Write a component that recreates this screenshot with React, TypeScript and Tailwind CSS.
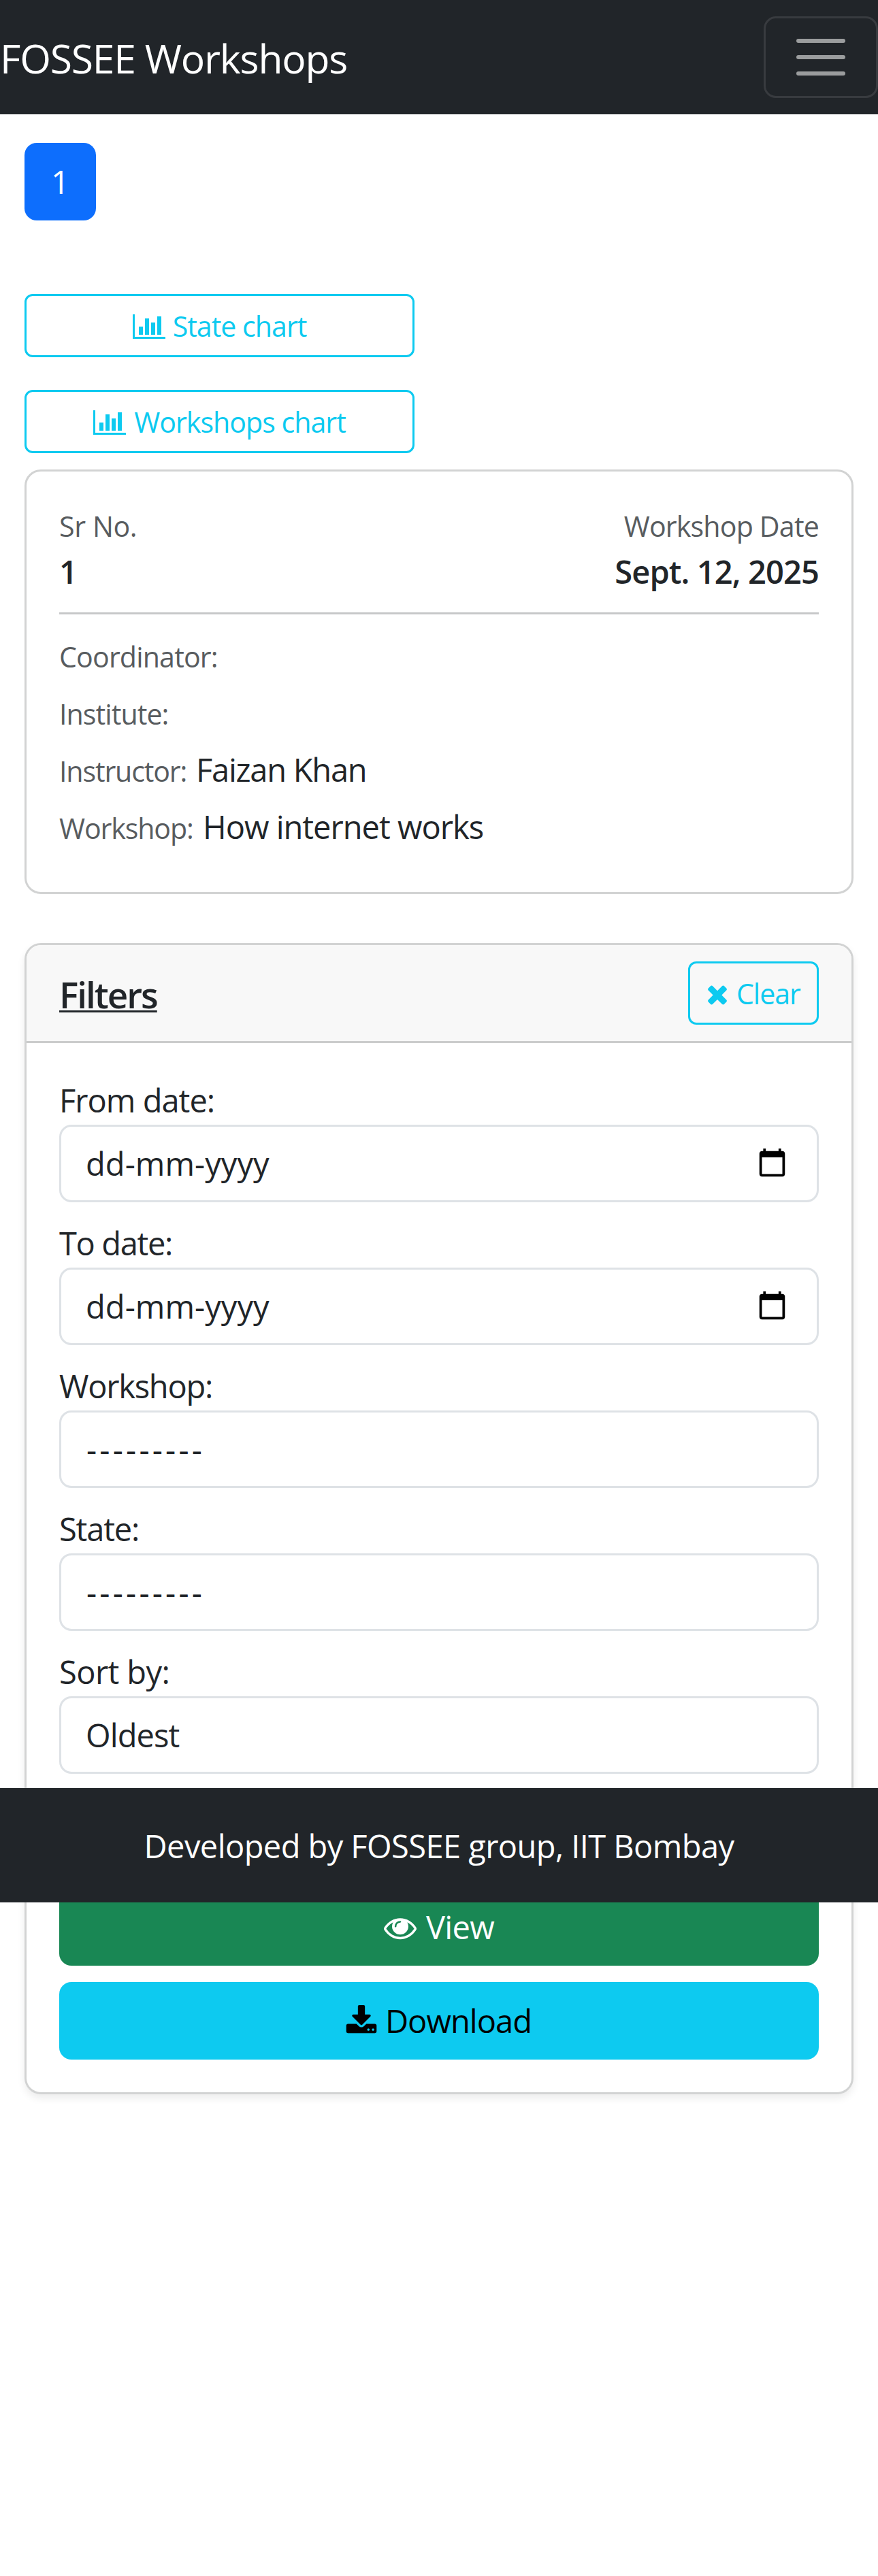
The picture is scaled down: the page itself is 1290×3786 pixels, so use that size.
import React from "react";

type IconProps = { className?: string };

const BarChartIcon = ({ className = "" }: IconProps) => (
  <svg viewBox="0 0 2048 1792" fill="currentColor" className={className}>
    <path d="M640 896v512h-256v-512h256zM1024 384v1024h-256v-1024h256zM2048 1536v128h-2048v-1536h128v1408h1920zM1408 640v768h-256v-768h256zM1792 256v1152h-256v-1152h256z" />
  </svg>
);

const TimesIcon = ({ className = "" }: IconProps) => (
  <svg viewBox="0 0 1792 1792" fill="currentColor" className={className}>
    <path d="M1490 1322q0 40-28 68l-136 136q-28 28-68 28t-68-28l-294-294-294 294q-28 28-68 28t-68-28l-136-136q-28-28-28-68t28-68l294-294-294-294q-28-28-28-68t28-68l136-136q28-28 68-28t68 28l294 294 294-294q28-28 68-28t68 28l136 136q28 28 28 68t-28 68l-294 294 294 294q28 28 28 68z" />
  </svg>
);

const EyeIcon = ({ className = "" }: IconProps) => (
  <svg viewBox="0 0 1792 1792" fill="currentColor" className={className}>
    <path d="M1664 960q-152-236-381-353 61 104 61 225 0 185-131.5 316.5t-316.5 131.5-316.5-131.5-131.5-316.5q0-121 61-225-229 117-381 353 133 205 333.5 326.5t434.5 121.5 434.5-121.5 333.5-326.5zm-720-384q0-20-14-34t-34-14q-125 0-214.5 89.5t-89.5 214.5q0 20 14 34t34 14 34-14 14-34q0-86 61-147t147-61q20 0 34-14t14-34zm848 384q0 34-20 69-140 230-376.5 368.5t-499.5 138.5-499.5-139-376.5-368q-20-35-20-69t20-69q140-229 376.5-368t499.5-139 499.5 139 376.5 368q20 35 20 69z" />
  </svg>
);

const DownloadIcon = ({ className = "" }: IconProps) => (
  <svg viewBox="0 0 1792 1792" fill="currentColor" className={className}>
    <path d="M1344 1344q0-26-19-45t-45-19-45 19-19 45 19 45 45 19 45-19 19-45zm256 0q0-26-19-45t-45-19-45 19-19 45 19 45 45 19 45-19 19-45zm128-224v320q0 40-28 68t-68 28h-1472q-40 0-68-28t-28-68v-320q0-40 28-68t68-28h465l135 136q58 56 136 56t136-56l136-136h464q40 0 68 28t28 68zm-325-569q17 41-14 70l-448 448q-18 19-45 19t-45-19l-448-448q-31-29-14-70 17-39 59-39h256v-448q0-26 19-45t45-19h256q26 0 45 19t19 45v448h256q42 0 59 39z" />
  </svg>
);

const CalendarIcon = ({ className = "" }: IconProps) => (
  <svg viewBox="0 0 24 24" fill="black" className={className}>
    <path d="M20 3h-1V1h-2v2H7V1H5v2H4c-1.1 0-2 .9-2 2v16c0 1.1.9 2 2 2h16c1.1 0 2-.9 2-2V5c0-1.1-.9-2-2-2zm0 18H4V8h16v13z" />
  </svg>
);

const outline =
  "flex h-[93px] items-center rounded-[12px] border-[3px] border-[#0dcaf0] text-[41.16px] leading-[63px] text-[#0dcaf0]";

const details = [
  { label: "Coordinator:", value: "", labelClass: "tracking-[-0.85px]" },
  { label: "Institute:", value: "", labelClass: "tracking-[-0.95px]" },
  { label: "Instructor:", value: "Faizan Khan", labelClass: "w-[201px] tracking-[-1.15px]", valueClass: "tracking-[-1.25px]" },
  { label: "Workshop:", value: "How internet works", labelClass: "w-[211px] tracking-[-1.12px]", valueClass: "tracking-[-1px]" },
];

const fields = [
  { label: "From date:", labelClass: "tracking-[-0.98px]", value: "dd-mm-yyyy", valueClass: "tracking-[0.05px]", date: true },
  { label: "To date:", labelClass: "tracking-[-1.36px]", value: "dd-mm-yyyy", valueClass: "tracking-[0.05px]", date: true },
  { label: "Workshop:", labelClass: "tracking-[-1.25px]", value: "---------", valueClass: "pl-px tracking-[4.22px]" },
  { label: "State:", labelClass: "tracking-[-1.17px]", value: "---------", valueClass: "pl-px tracking-[4.22px]" },
  { label: "Sort by:", labelClass: "tracking-[-0.6px]", value: "Oldest", valueClass: "tracking-[-0.91px]" },
];

function Navbar() {
  return (
    <header className="flex h-[168px] items-center justify-between bg-[#212529]">
      <span className="pt-[2px] text-[58.8px] leading-[90px] tracking-[-1.2px] text-white">FOSSEE Workshops</span>
      <button className="flex h-[120px] w-[168px] flex-col items-center justify-center gap-[18px] rounded-[18px] border-[3px] border-[#383b3f]">
        <span className="h-[6px] w-[72px] rounded-full bg-[#9b9d9e]" />
        <span className="h-[6px] w-[72px] rounded-full bg-[#9b9d9e]" />
        <span className="h-[6px] w-[72px] rounded-full bg-[#9b9d9e]" />
      </button>
    </header>
  );
}

function WorkshopCard() {
  return (
    <section className="mt-6 h-[624px] rounded-[24px] border-[3px] border-[#d2d3d3] p-12">
      <div className="flex justify-between">
        <div>
          <div className="h-[63px] pt-px text-[41.16px] leading-[63px] tracking-[-0.4px] text-[#585c5f]">Sr No.</div>
          <div className="font-semibold">1</div>
        </div>
        <div className="text-right">
          <div className="h-[63px] pt-px text-[41.16px] leading-[63px] tracking-[-0.84px] text-[#585c5f]">Workshop Date</div>
          <div className="font-semibold tracking-[-0.9px]">Sept. 12, 2025</div>
        </div>
      </div>
      <hr className="my-6 border-t-[3px] border-[#c7c8c9]" />
      <div className="flex flex-col gap-3">
        {details.map((d) => (
          <p key={d.label} className="h-[72px] whitespace-nowrap">
            <span className={`inline-block text-[41.16px] leading-none text-[#585c5f] ${d.labelClass}`}>{d.label}</span>
            <span className={d.valueClass}>{d.value}</span>
          </p>
        ))}
      </div>
    </section>
  );
}

function FiltersCard() {
  return (
    <section className="mt-[72px] rounded-[24px] border-[3px] border-[#d2d3d3] bg-white shadow-[0_6px_12px_rgba(0,0,0,0.075)]">
      <div className="flex h-[144px] items-center justify-between rounded-t-[21px] border-b-[3px] border-[#cbcccc] bg-[#f8f8f8] px-12">
        <h2 className="pt-1 text-[52.92px] leading-[65px] font-semibold tracking-[-1.99px] underline decoration-[3px] underline-offset-[3px] [text-decoration-skip-ink:none]">
          Filters
        </h2>
        <button className={`${outline} w-[192px] pl-[19px]`}>
          <TimesIcon className="mt-[3px] mr-[7px] size-[42px] shrink-0" />
          <span className="pt-[2px] tracking-[-1.07px]">Clear</span>
        </button>
      </div>
      <div className="p-12">
        {fields.map((f) => (
          <div key={f.label} className="mb-6">
            <label className={`block ${f.labelClass}`}>{f.label}</label>
            <div className="flex h-[114px] items-center justify-between rounded-[18px] border-[3px] border-[#dee2e6] pr-[43px] pl-9">
              <span className={f.valueClass}>{f.value}</span>
              {f.date && <CalendarIcon className="mb-[3px] size-[45px]" />}
            </div>
          </div>
        ))}
        <div className="mt-[168px] flex flex-col gap-6">
          <button className="flex h-[114px] items-center justify-center gap-[14px] rounded-[18px] bg-[#198754] text-white">
            <EyeIcon className="mt-[2px] size-12" />
            <span className="tracking-[-0.67px]">View</span>
          </button>
          <button className="flex h-[114px] items-center justify-center gap-[11px] rounded-[18px] bg-[#0dcaf0] pr-[2px] text-black">
            <DownloadIcon className="mt-[2px] size-12" />
            <span className="tracking-[-0.95px]">Download</span>
          </button>
        </div>
      </div>
    </section>
  );
}

export default function App() {
  return (
    <div className="relative h-[3786px] w-[1290px] overflow-hidden bg-white font-['Open_Sans','Noto_Sans',sans-serif] text-[47.04px] leading-[72px] text-[#212529]">
      <Navbar />
      <main className="px-9 pt-[42px]">
        <nav className="mb-[108px] flex">
          <span className="flex h-[114px] w-[105px] items-center justify-center rounded-[18px] bg-[#0d6efd] text-white">1</span>
        </nav>
        <div className="flex w-[573px] flex-col gap-12">
          <button className={`${outline} justify-center gap-[11px]`}>
            <BarChartIcon className="mt-[3px] h-[42px] w-[48px]" />
            <span className="pt-[2px] tracking-[-1.02px]">State chart</span>
          </button>
          <button className={`${outline} justify-center gap-[12px]`}>
            <BarChartIcon className="mt-[3px] h-[42px] w-[48px]" />
            <span className="pt-[2px] tracking-[-1px]">Workshops chart</span>
          </button>
        </div>
        <WorkshopCard />
        <FiltersCard />
      </main>
      <footer className="absolute top-[2628px] left-0 flex h-[168px] w-full items-center justify-center bg-[#212529] pt-px tracking-[-0.58px] text-white">
        Developed by FOSSEE group, IIT Bombay
      </footer>
    </div>
  );
}
